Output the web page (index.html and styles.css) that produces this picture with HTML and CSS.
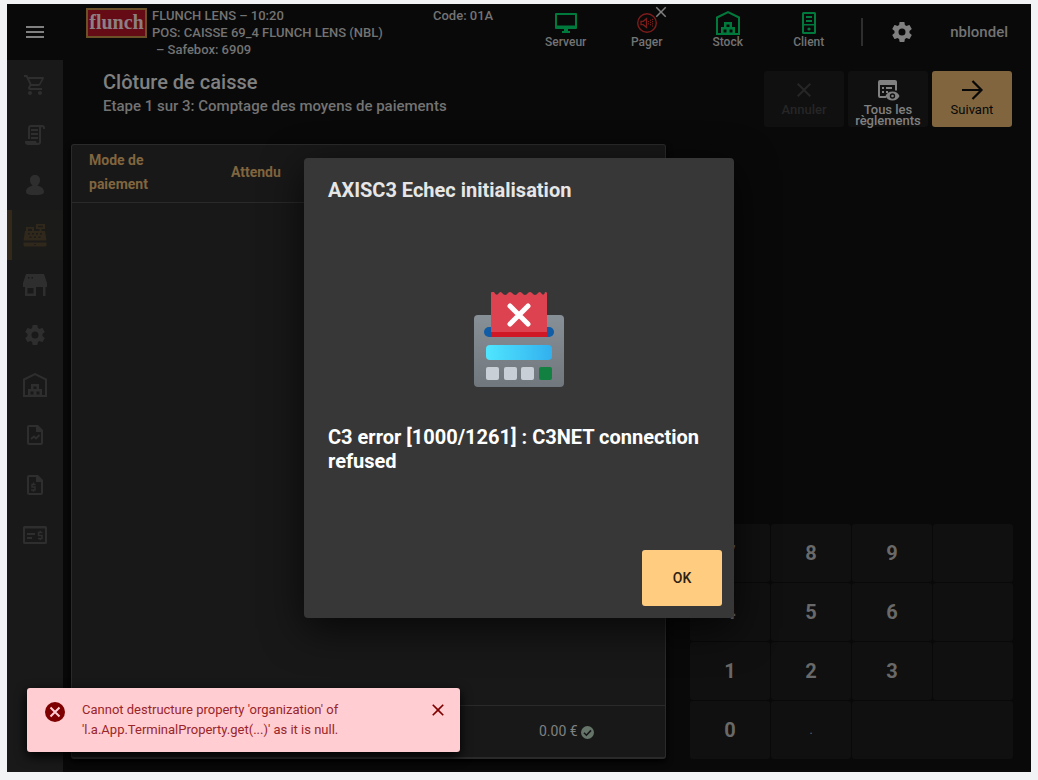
FILE: index.html
```html
<!DOCTYPE html>
<html lang="fr">
<head>
    <meta charset="UTF-8">
    <meta name="viewport" content="width=device-width, initial-scale=1.0">
    <title>Clôture de caisse</title>
    <link rel="stylesheet" href="styles.css">
</head>
<body>
    <!-- Icônes partagées -->
    <svg class="sprite" aria-hidden="true">
        <symbol id="cog" viewBox="0 0 24 24"><path d="M12,15.5A3.5,3.5 0 0,1 8.5,12A3.5,3.5 0 0,1 12,8.5A3.5,3.5 0 0,1 15.5,12A3.5,3.5 0 0,1 12,15.5M19.43,12.97C19.47,12.65 19.5,12.33 19.5,12C19.5,11.67 19.47,11.34 19.43,11L21.54,9.37C21.73,9.22 21.78,8.95 21.66,8.73L19.66,5.27C19.54,5.05 19.27,4.96 19.05,5.05L16.56,6.05C16.04,5.66 15.5,5.32 14.87,5.07L14.5,2.42C14.46,2.18 14.25,2 14,2H10C9.75,2 9.54,2.18 9.5,2.42L9.13,5.07C8.5,5.32 7.96,5.66 7.44,6.05L4.95,5.05C4.73,4.96 4.46,5.05 4.34,5.27L2.34,8.73C2.21,8.95 2.27,9.22 2.46,9.37L4.57,11C4.53,11.34 4.5,11.67 4.5,12C4.5,12.33 4.53,12.65 4.57,12.97L2.46,14.63C2.27,14.78 2.21,15.05 2.34,15.27L4.34,18.73C4.46,18.95 4.73,19.03 4.95,18.95L7.44,17.94C7.96,18.34 8.5,18.68 9.13,18.93L9.5,21.58C9.54,21.82 9.75,22 10,22H14C14.25,22 14.46,21.82 14.5,21.58L14.87,18.93C15.5,18.67 16.04,18.34 16.56,17.94L19.05,18.95C19.27,19.03 19.54,18.95 19.66,18.73L21.66,15.27C21.78,15.05 21.73,14.78 21.54,14.63L19.43,12.97Z"/></symbol>
        <symbol id="warehouse" viewBox="0 0 24 24"><path fill="none" stroke="currentColor" stroke-width="2" d="M1 23V6.5L12 1.2L23 6.5V23Z"/><path fill-rule="evenodd" d="M8 11H16V16H19V23H5V16H8ZM10.5 13.5V16H13.5V13.5ZM7.5 18.5V21.5H10.5V18.5ZM13.5 18.5V21.5H16.5V18.5Z"/></symbol>
        <symbol id="close" viewBox="0 0 24 24"><path d="M19,6.41L17.59,5L12,10.59L6.41,5L5,6.41L10.59,12L5,17.59L6.41,19L12,13.41L17.59,19L19,17.59L13.41,12L19,6.41Z"/></symbol>
    </svg>

    <div class="app">
        <header class="topbar">
            <button class="menu-button" aria-label="Menu">
                <svg class="icon" viewBox="0 0 24 24"><path d="M3,6H21V8H3V6M3,11H21V13H3V11M3,16H21V18H3V16Z"/></svg>
            </button>
            <div class="logo">flunch</div>
            <div class="pos-info">
                FLUNCH LENS – 10:20<br>
                POS: CAISSE 69_4 FLUNCH LENS (NBL)<br>
                <span class="safebox">– Safebox: 6909</span>
            </div>
            <div class="code">Code: 01A</div>
            <div class="statuses">
                <div class="status">
                    <svg class="icon green" viewBox="0 0 24 24"><path fill-rule="evenodd" d="M2 2H22Q23 2 23 3V17Q23 18 22 18H14V20H16V22H8V20H10V18H2Q1 18 1 17V3Q1 2 2 2ZM3 4V14.5H21V4Z"/></svg>
                    Serveur
                </div>
                <div class="status">
                    <svg class="icon red" viewBox="0 0 24 24"><g fill="none" stroke="currentColor"><circle cx="12" cy="12" r="9.3" stroke-width="1.4"/><path stroke-width="1.3" d="M6 10.3H8.2L11.5 7.7V16.3L8.2 13.7H6Z"/><path stroke-dasharray="1.2 1" d="M13.5 10V14M15.5 8.7V15.3M17.5 7.8V16.2"/></g></svg>
                    Pager
                    <svg class="icon badge"><use href="#close"/></svg>
                </div>
                <div class="status">
                    <svg class="icon green"><use href="#warehouse"/></svg>
                    Stock
                </div>
                <div class="status">
                    <svg class="icon green" viewBox="0 0 24 24"><path fill-rule="evenodd" d="M6.5 1H17.5Q19 1 19 2.5V21.5Q19 23 17.5 23H6.5Q5 23 5 21.5V2.5Q5 1 6.5 1ZM7 3V13H17V3ZM7 14.5V21H17V14.5ZM9 5H15V7H9ZM9 9H15V11H9Z"/><circle cx="12" cy="18" r="1.6"/></svg>
                    Client
                </div>
            </div>
            <div class="divider"></div>
            <button class="settings-button" aria-label="Paramètres"><svg class="icon"><use href="#cog"/></svg></button>
            <div class="user">nblondel</div>
        </header>

        <nav class="sidebar">
            <a href="#" aria-label="Vente"><svg class="icon" viewBox="0 0 24 24"><path d="M17,18A2,2 0 0,1 19,20A2,2 0 0,1 17,22C15.89,22 15,21.1 15,20C15,18.89 15.89,18 17,18M1,2H4.27L5.21,4H20A1,1 0 0,1 21,5C21,5.17 20.95,5.34 20.88,5.5L17.3,11.97C16.96,12.58 16.3,13 15.55,13H8.1L7.2,14.63L7.17,14.75A0.25,0.25 0 0,0 7.42,15H19V17H7C5.89,17 5,16.1 5,15C5,14.65 5.09,14.32 5.24,14.04L6.6,11.59L3,4H1V2M7,18A2,2 0 0,1 9,20A2,2 0 0,1 7,22C5.89,22 5,21.1 5,20C5,18.89 5.89,18 7,18M16,11L18.78,6H6.14L8.5,11H16Z"/></svg></a>
            <a href="#" aria-label="Tickets"><svg class="icon" viewBox="0 0 24 24"><path d="M15,20A1,1 0 0,0 16,19V4H8A1,1 0 0,0 7,5V16H5V5A3,3 0 0,1 8,2H19A3,3 0 0,1 22,5V6H20V5A1,1 0 0,0 19,4A1,1 0 0,0 18,5V9L18,19A3,3 0 0,1 15,22H5A3,3 0 0,1 2,19V18H13A2,2 0 0,0 15,20M8,6H15V8H8V6M8,10H15V12H8V10M8,14H15V16H8V14Z"/></svg></a>
            <a href="#" aria-label="Clients"><svg class="icon" viewBox="0 0 24 24"><path d="M12 2C15 2 17 4 17 7C17 9.5 16 11.5 14.3 12.5C18 13.5 21 15 21 19C21 21.5 17 22 12 22S3 21.5 3 19C3 15 6 13.5 9.7 12.5C8 11.5 7 9.5 7 7C7 4 9 2 12 2Z"/></svg></a>
            <a href="#" class="active" aria-label="Caisse"><svg class="icon" viewBox="0 0 24 24"><path fill-rule="evenodd" d="M13 1H22V6H18.5V8H22L23.5 17.5H.5L2 8H3V4H11V8H16.5V6H13ZM15 2.8V4.2H20V2.8ZM5 5.8V8H9V5.8ZM5 10V11.5H7V10ZM9 10V11.5H11V10ZM13 10V11.5H15V10ZM17 10V11.5H19V10ZM6.5 13.5V15H8.5V13.5ZM11 13.5V15H13V13.5ZM15.5 13.5V15H17.5V13.5Z"/><path fill-rule="evenodd" d="M.5 19.5H23.5V22Q23.5 23.5 22 23.5H2Q.5 23.5 .5 22ZM11 21V22H13V21Z"/></svg></a>
            <a href="#" aria-label="Magasin"><svg class="icon" viewBox="0 0 24 24"><path fill-rule="evenodd" d="M3 1H21L24 10V14H22.5V23H20V14H13V23H2V14H0V10ZM5 4V5.5H6.5V4ZM8.5 4V5.5H10V4ZM4.5 15V20.5H10.5V15Z"/></svg></a>
            <a href="#" aria-label="Paramétrage"><svg class="icon"><use href="#cog"/></svg></a>
            <a href="#" aria-label="Stock"><svg class="icon"><use href="#warehouse"/></svg></a>
            <a href="#" aria-label="Rapports"><svg class="icon" viewBox="0 0 24 24"><path fill-rule="evenodd" d="M6 2H15L20 7V20Q20 22 18 22H6Q4 22 4 20V4Q4 2 6 2ZM6 4V20H18V9H13V4Z"/><path fill="none" stroke="currentColor" stroke-width="1.8" d="M8 16L11 13.5L13 15.5L16.5 12"/></svg></a>
            <a href="#" aria-label="Factures"><svg class="icon" viewBox="0 0 24 24"><path fill-rule="evenodd" d="M6 2H15L20 7V20Q20 22 18 22H6Q4 22 4 20V4Q4 2 6 2ZM6 4V20H18V9H13V4Z"/><path fill="none" stroke="currentColor" stroke-width="1.4" d="M12.5 11.5H9V14H12V17H8M10.5 9.5V11.5M10.5 17V18.8"/></svg></a>
            <a href="#" aria-label="Chèques"><svg class="icon" viewBox="0 0 24 24"><path fill-rule="evenodd" d="M1.5 3H22.5Q24 3 24 4.5V19.5Q24 21 22.5 21H1.5Q0 21 0 19.5V4.5Q0 3 1.5 3ZM2 5.5V19H22V5.5ZM4 10H12V12H4ZM4 14H9V16H4Z"/><path fill="none" stroke="currentColor" stroke-width="1.5" d="M19.5 9.5H15.5V12.5H19V15.5H15M17.3 7.8V9.5M17.3 15.5V17.3"/></svg></a>
        </nav>

        <main class="content">
            <div class="page-head">
                <div class="titles">
                    <h1>Clôture de caisse</h1>
                    <p>Etape 1 sur 3: Comptage des moyens de paiements</p>
                </div>
                <div class="actions">
                    <button class="action" disabled>
                        <svg class="icon"><use href="#close"/></svg>
                        Annuler
                    </button>
                    <button class="action">
                        <svg class="icon" viewBox="0 0 24 24"><path fill-rule="evenodd" d="M4 2H19Q21 2 21 4V12.5H19V7H4V18H10V20H4Q2 20 2 18V4Q2 2 4 2ZM6 9H8V11H6ZM10 9H16V11H10ZM6 13H8V15H6ZM10 13H12V15H10Z"/><path fill-rule="evenodd" d="M16.5 13.5C20 13.5 22.5 15.5 23.5 18C22.5 20.5 20 22.5 16.5 22.5S10.5 20.5 9.5 18C10.5 15.5 13 13.5 16.5 13.5ZM16.5 15.3A2.7 2.7 0 1 0 16.5 20.7A2.7 2.7 0 1 0 16.5 15.3Z"/><circle cx="16.5" cy="18" r="1.3"/></svg>
                        Tous les règlements
                    </button>
                    <button class="action next">
                        <svg class="icon" viewBox="0 0 24 24"><path fill="none" stroke="currentColor" stroke-width="2.2" d="M2 12H21M12.5 3L21.5 12L12.5 21"/></svg>
                        Suivant
                    </button>
                </div>
            </div>

            <div class="work-area">
                <div class="card">
                    <table class="payments">
                        <thead>
                            <tr>
                                <th class="mode" scope="col">Mode de paiement</th>
                                <th scope="col">Attendu</th>
                                <td></td>
                                <td class="last"></td>
                            </tr>
                        </thead>
                        <tbody>
                            <tr><td colspan="4"></td></tr>
                        </tbody>
                        <tfoot>
                            <tr>
                                <td></td>
                                <td></td>
                                <td></td>
                                <td class="last">0.00 € <svg class="check" viewBox="0 0 24 24"><circle cx="12" cy="12" r="12"/><path d="M5.5 12.5L10 17L18.5 8"/></svg></td>
                            </tr>
                        </tfoot>
                    </table>
                </div>

                <div class="keypad">
                    <button>7</button>
                    <button>8</button>
                    <button>9</button>
                    <button aria-label="Effacer"></button>
                    <button>4</button>
                    <button>5</button>
                    <button>6</button>
                    <button aria-label="Quantité"></button>
                    <button>1</button>
                    <button>2</button>
                    <button>3</button>
                    <button aria-label="Signe"></button>
                    <button>0</button>
                    <button class="dot">.</button>
                    <button class="wide" aria-label="Valider"></button>
                </div>
            </div>
        </main>

        <!-- Fenêtre d'erreur -->
        <div class="overlay">
            <div class="modal" role="dialog" aria-labelledby="modalTitle">
                <h2 id="modalTitle">AXISC3 Echec initialisation</h2>
                <svg class="terminal" viewBox="0 0 96 96">
                    <defs>
                        <linearGradient id="caseFill" x1="0" y1="0" x2="0" y2="1"><stop offset="0" stop-color="#889097"/><stop offset="1" stop-color="#70777d"/></linearGradient>
                        <linearGradient id="screenFill" x1="0" y1="0" x2="1" y2="0"><stop offset="0" stop-color="#50e6ff"/><stop offset="1" stop-color="#32b0ee"/></linearGradient>
                    </defs>
                    <rect x="3" y="23" width="90" height="72" rx="4" fill="url(#caseFill)"/>
                    <rect x="13" y="35" width="70" height="10" rx="5" fill="#105ca5"/>
                    <path fill="#dc4250" d="M20 1Q20 0 21 0H23Q25.5 5 28 1Q29.5 -1 31 1Q34.5 5 37 1Q39 -1 41 1Q44.5 5 47 1Q49 -1 51 1Q54 5 57 1Q59 -1 61 1Q64 5 67 1Q69 -1 70 1Q73 5 74 0Q76 0 76 1V45H20Z"/>
                    <rect x="20" y="40" width="56" height="5" fill="#cf1725"/>
                    <path fill="none" stroke="#fff" stroke-width="5" stroke-linecap="round" d="M39 14L57 32M57 14L39 32"/>
                    <rect x="15" y="53" width="66" height="15" rx="4" fill="url(#screenFill)"/>
                    <g fill="#c9cfd6"><rect x="15" y="75" width="13" height="13" rx="2"/><rect x="33" y="75" width="13" height="13" rx="2"/><rect x="50" y="75" width="13" height="13" rx="2"/></g>
                    <rect x="68" y="75" width="13" height="13" rx="2" fill="#128041"/>
                </svg>
                <p class="message">C3 error [1000/1261] : C3NET connection refused</p>
                <button class="ok-button">OK</button>
            </div>
        </div>

        <div class="toast" role="alert">
            <svg class="toast-icon" viewBox="0 0 20 20"><circle cx="10" cy="10" r="10" fill="#7f0000"/><path fill="none" stroke="#ffcdd2" stroke-width="2" d="M5.5 5.5L14.5 14.5M14.5 5.5L5.5 14.5"/></svg>
            <p>Cannot destructure property 'organization' of 'l.a.App.TerminalProperty.get(...)' as it is null.</p>
            <button class="toast-close" aria-label="Fermer"><svg class="icon"><use href="#close"/></svg></button>
        </div>
    </div>
</body>
</html>
```
FILE: styles.css
```css
* {
    box-sizing: border-box;
}

body {
    font-family: Roboto, "Liberation Sans", sans-serif;
    margin: 0;
    padding: 4px 7px 8px;
    background: #f1f3f5;
    color: #808080;
}

h1, h2, p {
    margin: 0;
}

button {
    font-family: inherit;
    color: inherit;
    background: none;
    border: none;
    padding: 0;
    cursor: pointer;
}

.sprite {
    display: none;
}

.icon {
    width: 24px;
    height: 24px;
    fill: currentColor;
    display: block;
    flex: none;
}

.app {
    position: relative;
    display: grid;
    grid-template-columns: 56px minmax(0, 1fr);
    grid-template-rows: 56px minmax(0, 1fr);
    min-height: calc(100vh - 12px);
    background: #090909;
}

/* Barre du haut */
.topbar {
    grid-column: 1 / 3;
    display: flex;
    align-items: flex-start;
    font-size: 12px;
    font-weight: 500;
    padding-right: 23px;
    color: #737373;
}

.menu-button {
    width: 56px;
    height: 56px;
    padding: 0 16px;
    color: #808080;
}

.logo {
    width: 61px;
    height: 30px;
    margin: 4px 5px 0 23px;
    border: 2px solid #6c5028;
    background: #650b16;
    color: #8c8082;
    font: bold 20px/25px "Liberation Serif", serif;
    text-align: center;
}

.pos-info {
    width: 281px;
    padding-top: 3px;
    font-size: 13px;
    line-height: 17px;
}

.safebox {
    padding-left: 4px;
}

.code {
    padding-top: 3px;
    font-size: 13px;
    line-height: 17px;
}

.statuses {
    display: flex;
    margin-left: auto;
    padding-top: 7px;
}

.status {
    position: relative;
    width: 81px;
    display: flex;
    flex-direction: column;
    align-items: center;
    line-height: 14px;
}

.green {
    color: #007a3c;
}

.red {
    color: #7c1c1b;
}

.badge {
    position: absolute;
    top: -8px;
    left: 46px;
    width: 18px;
    height: 18px;
    color: #808080;
}

.divider {
    width: 2px;
    height: 28px;
    margin: 14px 27px 0 12px;
    background: #2e2e2e;
}

.settings-button {
    padding-top: 16px;
    color: #808080;
}

.user {
    margin-left: 36px;
    font-size: 15px;
    line-height: 56px;
}

/* Menu latéral */
.sidebar {
    background: #191919;
}

.sidebar a {
    display: flex;
    align-items: center;
    justify-content: center;
    height: 50px;
    color: #2e2e2e;
}

.sidebar .active {
    background: #1b1b1a;
    color: #30281a;
    border-left: 5px solid #32291b;
    padding-right: 5px;
}

/* Contenu */
.content {
    display: flex;
    flex-direction: column;
    padding: 11px 18px 13px 8px;
}

.page-head {
    display: flex;
    justify-content: space-between;
    height: 73px;
    padding-right: 1px;
}

.titles {
    padding-left: 32px;
}

.titles h1 {
    font-size: 20px;
    font-weight: 500;
    line-height: 23px;
}

.titles p {
    font-size: 15px;
    font-weight: 500;
    line-height: 24px;
    color: #737373;
}

.actions {
    display: flex;
    gap: 4px;
}

.action {
    display: flex;
    flex-direction: column;
    align-items: center;
    gap: 2px;
    width: 80px;
    height: 56px;
    padding-top: 7px;
    border-radius: 3px;
    background: #101010;
    color: #808080;
    font-size: 13px;
    font-weight: 500;
    line-height: 11px;
}

.action:disabled {
    color: #262626;
}

.action.next {
    background: #80653f;
    color: #080808;
    font-weight: 400;
}

.work-area {
    flex: 1;
    display: grid;
    grid-template-columns: minmax(0, 1fr) 323px;
    gap: 24px;
}

.card {
    display: flex;
    background: #181818;
    border: 1px solid #2a2a2a;
    border-bottom-width: 2px;
    border-radius: 3px;
    box-shadow: 0 3px 6px #000;
}

.payments {
    width: 100%;
    table-layout: fixed;
    border-collapse: collapse;
    font-size: 14px;
    text-align: center;
}

.payments th {
    font-weight: 700;
    line-height: 24px;
    color: #80653f;
    padding: 0 0 3px;
}

.payments thead tr {
    height: 57px;
    border-bottom: 1px solid #2a2a2a;
}

.payments .mode {
    width: 18%;
    padding-left: 17px;
    text-align: left;
}

.payments .last {
    width: 30%;
    padding-right: 20px;
}

.payments tfoot tr {
    height: 52px;
    border-top: 1px solid #2a2a2a;
}

.check {
    width: 13px;
    height: 13px;
    vertical-align: -3px;
    fill: #65756a;
}

.check path {
    fill: none;
    stroke: #181818;
    stroke-width: 3;
}

.keypad {
    align-self: end;
    display: grid;
    grid-template-columns: repeat(4, 1fr);
    grid-auto-rows: 58px;
    gap: 1px;
}

.keypad button {
    background: #101010;
    border-radius: 3px;
    font-size: 20px;
    font-weight: 700;
    color: #696969;
}

.keypad .dot {
    font-size: 12px;
    font-weight: 400;
}

.keypad .wide {
    grid-column: span 2;
}

/* Fenêtre d'erreur */
.overlay {
    position: absolute;
    inset: 0;
    display: flex;
    align-items: center;
    justify-content: center;
}

.modal {
    display: flex;
    flex-direction: column;
    width: 430px;
    min-height: 460px;
    padding: 20px 12px 12px 24px;
    border-radius: 4px;
    background: #373737;
    box-shadow: 0 11px 40px rgba(0, 0, 0, 0.7);
}

.modal h2 {
    font-size: 20px;
    font-weight: 700;
    line-height: 24px;
    color: #e6e6e6;
}

.terminal {
    width: 96px;
    height: 96px;
    margin: 90px auto 37px 143px;
}

.message {
    font-size: 20px;
    font-weight: 700;
    line-height: 24px;
    color: #fff;
}

.ok-button {
    width: 80px;
    height: 56px;
    margin: auto 0 0 auto;
    border-radius: 3px;
    background: #ffcc80;
    color: #2a2115;
    font-size: 14px;
    font-weight: 500;
}

/* Notification */
.toast {
    position: absolute;
    left: 20px;
    bottom: 20px;
    display: flex;
    align-items: flex-start;
    width: 433px;
    padding: 12px 12px 12px 18px;
    border-radius: 3px;
    background: #ffcdd2;
    color: #98262b;
    box-shadow: 0 4px 12px #000;
}

.toast-icon {
    width: 20px;
    height: 20px;
    margin: 2px 17px 0 0;
    flex: none;
}

.toast p {
    width: 300px;
    font-size: 13px;
    line-height: 20px;
}

.toast-close {
    margin-left: auto;
    color: #7f0000;
}

.toast-close .icon {
    width: 20px;
    height: 20px;
}
```
